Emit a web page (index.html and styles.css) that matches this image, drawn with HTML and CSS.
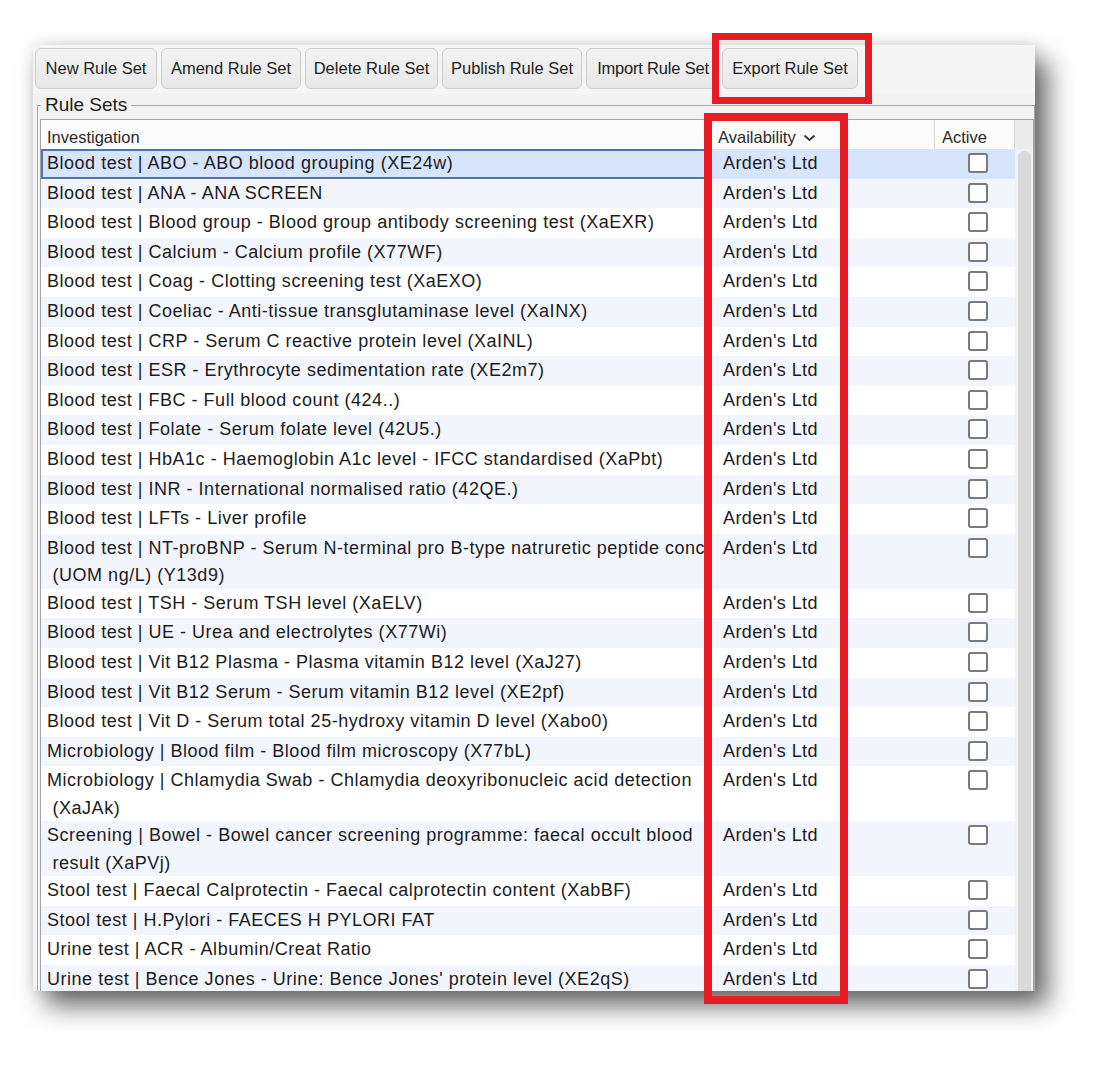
FILE: index.html
```html
<!DOCTYPE html>
<html>
<head>
<meta charset="utf-8">
<link rel="stylesheet" href="styles.css">
</head>
<body>
<div class="stage">
  <div class="panel">
    <div class="toolbar">
      <button class="btn b-new">New Rule Set</button>
      <button class="btn b-amend">Amend Rule Set</button>
      <button class="btn b-delete">Delete Rule Set</button>
      <button class="btn b-publish">Publish Rule Set</button>
      <button class="btn b-import">Import Rule Set</button>
      <button class="btn b-export">Export Rule Set</button>
    </div>
    <fieldset class="group">
      <legend class="legend">Rule Sets</legend>
      <div class="table">
        <div class="thead">
          <div class="th c1">Investigation</div>
          <div class="th c2">Availability
            <svg class="chev" width="13" height="8" viewBox="0 0 13 8"><polyline points="1.5,1.5 6.5,6 11.5,1.5" fill="none" stroke="#333" stroke-width="1.8"/></svg>
          </div>
          <div class="th c3">Active</div>
          <div class="th corner"></div>
        </div>
        <div class="tbody">
          <div class="rows">
            <div class="row sel"><div class="c1">Blood test | ABO - ABO blood grouping (XE24w)</div><div class="c2">Arden's Ltd</div><div class="c3"><span class="cb"></span></div></div>
            <div class="row alt"><div class="c1">Blood test | ANA - ANA SCREEN</div><div class="c2">Arden's Ltd</div><div class="c3"><span class="cb"></span></div></div>
            <div class="row"><div class="c1">Blood test | Blood group - Blood group antibody screening test (XaEXR)</div><div class="c2">Arden's Ltd</div><div class="c3"><span class="cb"></span></div></div>
            <div class="row alt"><div class="c1">Blood test | Calcium - Calcium profile (X77WF)</div><div class="c2">Arden's Ltd</div><div class="c3"><span class="cb"></span></div></div>
            <div class="row"><div class="c1">Blood test | Coag - Clotting screening test (XaEXO)</div><div class="c2">Arden's Ltd</div><div class="c3"><span class="cb"></span></div></div>
            <div class="row alt"><div class="c1">Blood test | Coeliac - Anti-tissue transglutaminase level (XaINX)</div><div class="c2">Arden's Ltd</div><div class="c3"><span class="cb"></span></div></div>
            <div class="row"><div class="c1">Blood test | CRP - Serum C reactive protein level (XaINL)</div><div class="c2">Arden's Ltd</div><div class="c3"><span class="cb"></span></div></div>
            <div class="row alt"><div class="c1">Blood test | ESR - Erythrocyte sedimentation rate (XE2m7)</div><div class="c2">Arden's Ltd</div><div class="c3"><span class="cb"></span></div></div>
            <div class="row"><div class="c1">Blood test | FBC - Full blood count (424..)</div><div class="c2">Arden's Ltd</div><div class="c3"><span class="cb"></span></div></div>
            <div class="row alt"><div class="c1">Blood test | Folate - Serum folate level (42U5.)</div><div class="c2">Arden's Ltd</div><div class="c3"><span class="cb"></span></div></div>
            <div class="row"><div class="c1">Blood test | HbA1c - Haemoglobin A1c level - IFCC standardised (XaPbt)</div><div class="c2">Arden's Ltd</div><div class="c3"><span class="cb"></span></div></div>
            <div class="row alt"><div class="c1">Blood test | INR - International normalised ratio (42QE.)</div><div class="c2">Arden's Ltd</div><div class="c3"><span class="cb"></span></div></div>
            <div class="row"><div class="c1">Blood test | LFTs - Liver profile</div><div class="c2">Arden's Ltd</div><div class="c3"><span class="cb"></span></div></div>
            <div class="row alt two"><div class="c1">Blood test | NT-proBNP - Serum N-terminal pro B-type natruretic peptide conc<br>&nbsp;(UOM ng/L) (Y13d9)</div><div class="c2">Arden's Ltd</div><div class="c3"><span class="cb"></span></div></div>
            <div class="row"><div class="c1">Blood test | TSH - Serum TSH level (XaELV)</div><div class="c2">Arden's Ltd</div><div class="c3"><span class="cb"></span></div></div>
            <div class="row alt"><div class="c1">Blood test | UE - Urea and electrolytes (X77Wi)</div><div class="c2">Arden's Ltd</div><div class="c3"><span class="cb"></span></div></div>
            <div class="row"><div class="c1">Blood test | Vit B12 Plasma - Plasma vitamin B12 level (XaJ27)</div><div class="c2">Arden's Ltd</div><div class="c3"><span class="cb"></span></div></div>
            <div class="row alt"><div class="c1">Blood test | Vit B12 Serum - Serum vitamin B12 level (XE2pf)</div><div class="c2">Arden's Ltd</div><div class="c3"><span class="cb"></span></div></div>
            <div class="row"><div class="c1">Blood test | Vit D - Serum total 25-hydroxy vitamin D level (Xabo0)</div><div class="c2">Arden's Ltd</div><div class="c3"><span class="cb"></span></div></div>
            <div class="row alt"><div class="c1">Microbiology | Blood film - Blood film microscopy (X77bL)</div><div class="c2">Arden's Ltd</div><div class="c3"><span class="cb"></span></div></div>
            <div class="row two"><div class="c1">Microbiology | Chlamydia Swab - Chlamydia deoxyribonucleic acid detection<br>&nbsp;(XaJAk)</div><div class="c2">Arden's Ltd</div><div class="c3"><span class="cb"></span></div></div>
            <div class="row alt two"><div class="c1">Screening | Bowel - Bowel cancer screening programme: faecal occult blood<br>&nbsp;result (XaPVj)</div><div class="c2">Arden's Ltd</div><div class="c3"><span class="cb"></span></div></div>
            <div class="row"><div class="c1">Stool test | Faecal Calprotectin - Faecal calprotectin content (XabBF)</div><div class="c2">Arden's Ltd</div><div class="c3"><span class="cb"></span></div></div>
            <div class="row alt"><div class="c1">Stool test | H.Pylori - FAECES H PYLORI FAT</div><div class="c2">Arden's Ltd</div><div class="c3"><span class="cb"></span></div></div>
            <div class="row"><div class="c1">Urine test | ACR - Albumin/Creat Ratio</div><div class="c2">Arden's Ltd</div><div class="c3"><span class="cb"></span></div></div>
            <div class="row alt"><div class="c1">Urine test | Bence Jones - Urine: Bence Jones' protein level (XE2qS)</div><div class="c2">Arden's Ltd</div><div class="c3"><span class="cb"></span></div></div>
          </div>
          <div class="vscroll"><div class="thumb"></div></div>
        </div>
      </div>
    </fieldset>
  </div>
  <div class="mark mark-export"></div>
  <div class="mark mark-avail"></div>
</div>
</body>
</html>
```

FILE: styles.css
```css
* { box-sizing: border-box; }
html, body {
  margin: 0;
  background: #ffffff;
  font-family: "Liberation Sans", Arial, sans-serif;
  color: #1c1c1c;
}
.stage {
  position: relative;
  width: 1101px;
  height: 1070px;
  padding: 45px 0 0 33px;
  overflow: hidden;
}
.panel {
  width: 1002px;
  height: 946px;
  background: #f2f2f2;
  overflow: hidden;
  box-shadow: 13px 15px 24px rgba(0, 0, 0, 0.58), 0 0 14px rgba(0, 0, 0, 0.12);
  display: flex;
  flex-direction: column;
}
.toolbar {
  height: 48px;
  flex: none;
  display: flex;
  gap: 4px;
  padding: 3px 0 0 2px;
  background: #f5f5f5;
}
.btn {
  flex: none;
  height: 41px;
  padding: 0;
  font-family: "Liberation Sans", Arial, sans-serif;
  font-size: 16.5px;
  color: #222;
  background: linear-gradient(#f3f3f3, #e8e8e8);
  border: 1px solid #cdcdcd;
  border-radius: 6px;
  white-space: nowrap;
  overflow: hidden;
}
.b-new { width: 122px; }
.b-amend { width: 140px; }
.b-delete { width: 133px; }
.b-publish { width: 140px; }
.b-import { width: 132px; letter-spacing: -0.2px; padding-left: 2px; }
.b-export { width: 136px; }
.group {
  margin: 2px 0 0 4px;
  padding: 0 0 0 2px;
  border: 1px solid #aaaaaa;
  min-width: 0;
  flex: 1;
}
.legend {
  font-size: 19px;
  padding: 0 4px;
  margin-left: 1px;
  line-height: 20px;
  color: #1c1c1c;
}
.table {
  margin-top: 4px;
  width: 994px;
  border: 1px solid #a3a3a3;
  background: #ffffff;
}
.thead {
  display: flex;
  height: 29px;
  background: #fbfbfb;
}
.th {
  font-size: 16.5px;
  color: #2a2a2a;
  padding-top: 8px;
  white-space: nowrap;
}
.th.c1 { width: 671px; padding-left: 6px; }
.th.c2 { width: 223px; padding-left: 6px; border-right: 1px solid #d4d4d4; }
.th.c3 { width: 80px; padding-left: 7px; border-right: 1px solid #d4d4d4; }
.th.corner { flex: 1; background: #ececec; }
.chev { margin-left: 3px; vertical-align: 1px; }
.tbody {
  display: flex;
}
.rows {
  width: 974px;
}
.row {
  display: flex;
  height: 29.6px;
  background: #ffffff;
  font-size: 18px;
  letter-spacing: 0.52px;
  line-height: 27.4px;
}
.row.two { height: 55px; }
.row.alt { background: #f3f5fd; }
.row.sel { background: #d6e5fb; }
.row .c1 {
  width: 671px;
  padding: 1px 0 0 6px;
  white-space: nowrap;
  overflow: hidden;
}
.row.sel .c1 { box-shadow: inset 0 0 0 2px #4a76b4; }
.row .c2 {
  width: 223px;
  padding: 1px 0 0 11px;
  white-space: nowrap;
  letter-spacing: 0.4px;
}
.row .c3 {
  width: 80px;
  padding: 4px 0 0 33px;
}
.cb {
  display: block;
  width: 20px;
  height: 20px;
  border: 2px solid #7a7a7a;
  border-radius: 3px;
  background: #ffffff;
}
.vscroll {
  flex: 1;
  background: #f1f1f1;
  padding: 2px 2px 0 3px;
}
.thumb {
  height: 900px;
  background: #dadada;
  border-radius: 6px 6px 0 0;
}
.mark {
  position: absolute;
  border-style: solid;
  border-color: #e61b23;
}
.mark-export {
  left: 712px;
  top: 33px;
  width: 160px;
  height: 71px;
  border-width: 7px;
}
.mark-avail {
  left: 704px;
  top: 113px;
  width: 144px;
  height: 891px;
  border-width: 8px;
}
```
